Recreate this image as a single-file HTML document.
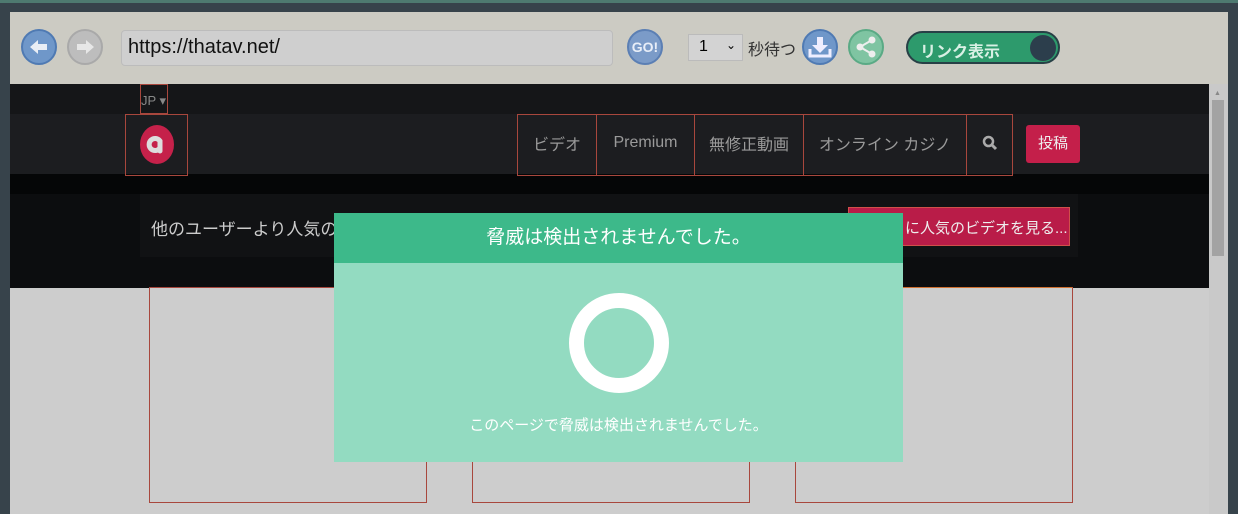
<!DOCTYPE html>
<html><head><meta charset="utf-8"><style>
*{margin:0;padding:0;box-sizing:border-box}
body{width:1238px;height:514px;overflow:hidden;background:#37434b;font-family:"Liberation Sans","Noto Sans CJK JP",sans-serif;position:relative}
.abs{position:absolute}
.tb{left:10px;top:12px;width:1218px;height:72px;background:#cccbc3}
.circ{border-radius:50%;width:36px;height:36px}
.page{left:10px;top:84px;width:1199px;height:430px;background:#cdcdcd;overflow:hidden}
.nb{border:1px solid #a8473d}
.navi{color:#9a9a9a;font-size:16px;display:flex;align-items:center;justify-content:center;height:62px;padding-bottom:4px}
</style></head><body>
<div class="abs" style="left:0;top:0;width:1238px;height:3px;background:#4e7a70"></div>
<div class="abs tb">
 <div class="abs circ" style="left:11px;top:17px;background:#6f97c9;border:2px solid #4f7ab3"><svg width="32" height="32" viewBox="0 0 32 32"><path d="M7 16l8-7v4h9v6h-9v4z" fill="#e9eef5"/></svg></div>
 <div class="abs circ" style="left:57px;top:17px;background:#bdbdbd;border:2px solid #a9a9a9"><svg width="32" height="32" viewBox="0 0 32 32"><path d="M25 16l-8-7v4H8v6h9v4z" fill="#e7e7e7"/></svg></div>
 <div class="abs" style="left:111px;top:18px;width:492px;height:36px;background:#cfcfcf;border:1px solid #bcbcbc;border-radius:4px;font-size:20px;color:#111;padding:5px 6px">https://thatav.net/</div>
 <div class="abs circ" style="left:617px;top:17px;background:#7b9bc8;border:2px solid #5b7fb4;color:#e8eef8;font-weight:bold;font-size:14px;line-height:32px;text-align:center">GO!</div>
 <div class="abs" style="left:678px;top:22px;width:55px;height:27px;background:#d3d3d3;border:1px solid #bbb;font-size:16px;padding:3px 10px">1<span style="position:absolute;right:6px;top:3px;font-size:12px">⌄</span></div>
 <div class="abs" style="left:738px;top:24px;font-size:16px;color:#333">秒待つ</div>
 <div class="abs circ" style="left:792px;top:17px;background:#6f97c9;border:2px solid #4f7ab3"><svg width="32" height="32" viewBox="0 0 32 32"><path d="M13 6h6v8h5l-8 8-8-8h5z" fill="#eef"/><path d="M6 18v7h20v-7" stroke="#eef" stroke-width="3" fill="none"/></svg></div>
 <div class="abs circ" style="left:838px;top:17px;background:#7fc4a2;border:2px solid #5aaa85"><svg width="32" height="32" viewBox="0 0 32 32"><circle cx="22" cy="9" r="3.5" fill="#eee"/><circle cx="10" cy="16" r="3.5" fill="#eee"/><circle cx="22" cy="23" r="3.5" fill="#eee"/><path d="M22 9L10 16l12 7" stroke="#eee" stroke-width="2" fill="none"/></svg></div>
 <div class="abs" style="left:896px;top:19px;width:154px;height:33px;border-radius:17px;background:#2d9a6c;border:2px solid #274046;color:#d8f0e4;font-weight:bold;font-size:16px;padding:5px 12px">リンク表示<div class="abs" style="right:2px;top:2px;width:26px;height:26px;border-radius:50%;background:#2c3e4c"></div></div>
</div>
<div class="abs page">
 <div class="abs" style="left:0;top:0;width:1199px;height:204px;background:#0c0d0f"></div>
 <div class="abs" style="left:0;top:0;width:1199px;height:30px;background:#151618"></div>
 <div class="abs nb" style="left:130px;top:0;width:28px;height:30px;color:#888;font-size:13px;padding:8px 0 0 0">JP ▾</div>
 <div class="abs" style="left:0;top:30px;width:1199px;height:60px;background:#1c1d20"></div>
 <div class="abs" style="left:0;top:90px;width:1199px;height:20px;background:#050607"></div>
 <div class="abs nb" style="left:115px;top:30px;width:63px;height:62px"><div class="abs" style="left:14px;top:10px;width:34px;height:39px;border-radius:50%;background:#c5214a"><svg width="34" height="39" viewBox="0 0 34 39"><path d="M22 26a6 6 0 1 1 0-7v10" stroke="#ddd" stroke-width="5" fill="none" stroke-linecap="round" transform="translate(-2,-3)"/></svg></div></div>
 <div class="abs nb navi" style="left:507px;top:30px;width:80px">ビデオ</div>
 <div class="abs nb navi" style="left:586px;top:30px;width:99px">Premium</div>
 <div class="abs nb navi" style="left:684px;top:30px;width:110px">無修正動画</div>
 <div class="abs nb navi" style="left:793px;top:30px;width:164px">オンライン カジノ</div>
 <div class="abs nb navi" style="left:956px;top:30px;width:47px"><svg width="16" height="16" viewBox="0 0 16 16"><circle cx="6.5" cy="6.5" r="4.5" stroke="#aaa" stroke-width="2.5" fill="none"/><path d="M10 10l4 4" stroke="#aaa" stroke-width="3"/></svg></div>
 <div class="abs" style="left:1016px;top:41px;width:54px;height:38px;background:#c41f4a;border-radius:3px;color:#eee;font-size:15px;text-align:center;line-height:38px">投稿</div>
 <div class="abs" style="left:130px;top:110px;width:938px;height:63px;background:#111214"></div>
 <div class="abs" style="left:141px;top:131px;color:#ccc;font-size:17px">他のユーザーより人気の</div>
 <div class="abs" style="left:838px;top:123px;width:222px;height:39px;background:#b91c48;border:1px solid #d0504a;color:#eee;font-size:15px;padding:9px 0 0 56px">に人気のビデオを見る...</div>
 <div class="abs nb" style="left:139px;top:203px;width:278px;height:216px"></div>
 <div class="abs nb" style="left:462px;top:203px;width:278px;height:216px"></div>
 <div class="abs nb" style="left:785px;top:203px;width:278px;height:216px;border-top-color:#d07030"></div>
</div>
<div class="abs" style="left:1209px;top:84px;width:19px;height:430px;background:#c9c9c9"><div class="abs" style="left:3px;top:16px;width:12px;height:156px;background:#a3a3a3"></div><div class="abs" style="left:5px;top:6px;color:#888;font-size:7px">▲</div></div>
<div class="abs" style="left:334px;top:213px;width:569px;height:50px;background:#3db98a;color:#fff;font-size:19px;text-align:center;line-height:50px">脅威は検出されませんでした。</div>
<div class="abs" style="left:334px;top:263px;width:569px;height:199px;background:#93dbc1">
 <div class="abs" style="left:235px;top:30px;width:100px;height:100px;border-radius:50%;border:15px solid #fff"></div>
 <div class="abs" style="left:0;top:151px;width:569px;text-align:center;color:#fff;font-size:15px">このページで脅威は検出されませんでした。</div>
</div>
</body></html>
